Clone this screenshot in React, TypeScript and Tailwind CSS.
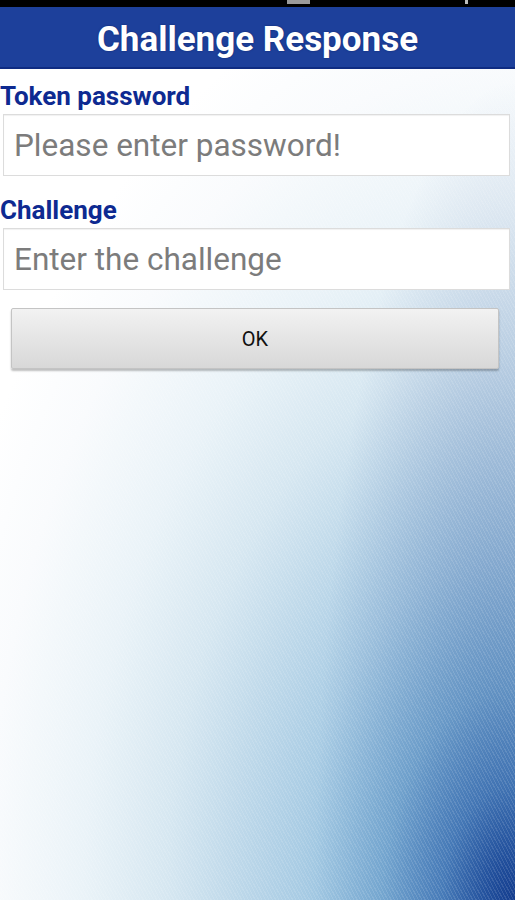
import { useState } from "react";

const ChallengeResponse = () => {
  const [password, setPassword] = useState("");
  const [challenge, setChallenge] = useState("");

  return (
    <div className="w-[515px] h-[900px] overflow-hidden font-['Roboto','Liberation_Sans',sans-serif] bg-white bg-[image:repeating-linear-gradient(62deg,rgba(255,255,255,0.12)_0px,rgba(255,255,255,0.12)_1px,transparent_1px,transparent_3px),radial-gradient(ellipse_200px_820px_at_100%_100%,rgba(20,60,140,0.42)_0%,rgba(20,60,140,0)_100%),radial-gradient(ellipse_600px_950px_at_100%_100%,#153e90_0%,#2d5fa8_5%,#5a92c8_12%,#84b7da_22%,#a9cce4_36%,#bfd9ea_47%,#d6e7f1_58%,#eaf3f8_72%,#f9fbfd_88%,#ffffff_100%)]">
      {/* Status bar */}
      <div className="h-[7px] bg-black flex items-start">
        <div className="ml-[287px] w-[23px] h-[4px] bg-[#9a9a9a]" />
        <div className="ml-[155px] w-[3px] h-[4px] bg-[#bdbdbd]" />
      </div>

      {/* Title bar */}
      <div className="h-[62px] pt-[4px] bg-[#1d409b] border-b-2 border-[#0f2c82] flex items-center justify-center">
        <h1 className="text-white font-bold text-[35px] leading-none [text-shadow:0_0_2px_rgba(0,20,80,0.6)]">
          Challenge Response
        </h1>
      </div>

      {/* Form */}
      <div className="flex flex-col">
        <label className="mt-[12px] mb-[3px] h-[30px] leading-[30px] text-[26px] font-bold text-[#0e2a91]">
          Token password
        </label>
        <input
          type="password"
          value={password}
          onChange={(e) => setPassword(e.target.value)}
          placeholder="Please enter password!"
          className="ml-[3px] w-[507px] h-[62px] bg-white border border-[#dcdcdc] shadow-[inset_0_1px_1px_rgba(0,0,0,0.06)] px-[10px] text-[31.5px] text-[#444] placeholder:text-[#7c7c7c] outline-none"
        />

        <label className="mt-[19px] mb-[3px] h-[30px] leading-[30px] text-[26px] font-bold text-[#0e2a91]">
          Challenge
        </label>
        <input
          type="text"
          value={challenge}
          onChange={(e) => setChallenge(e.target.value)}
          placeholder="Enter the challenge"
          className="ml-[3px] w-[507px] h-[62px] bg-white border border-[#dcdcdc] shadow-[inset_0_1px_1px_rgba(0,0,0,0.06)] px-[10px] text-[31.5px] text-[#444] placeholder:text-[#7c7c7c] outline-none"
        />

        <button className="mt-[18px] ml-[11px] w-[488px] h-[61px] rounded-[2px] bg-gradient-to-b from-[#f2f2f2] to-[#d8d8d8] border border-[#c4c4c4] shadow-[0_2px_2px_rgba(0,0,0,0.25)] text-[20px] text-[#111]">
          OK
        </button>
      </div>
    </div>
  );
};

export default function App() {
  return <ChallengeResponse />;
}
